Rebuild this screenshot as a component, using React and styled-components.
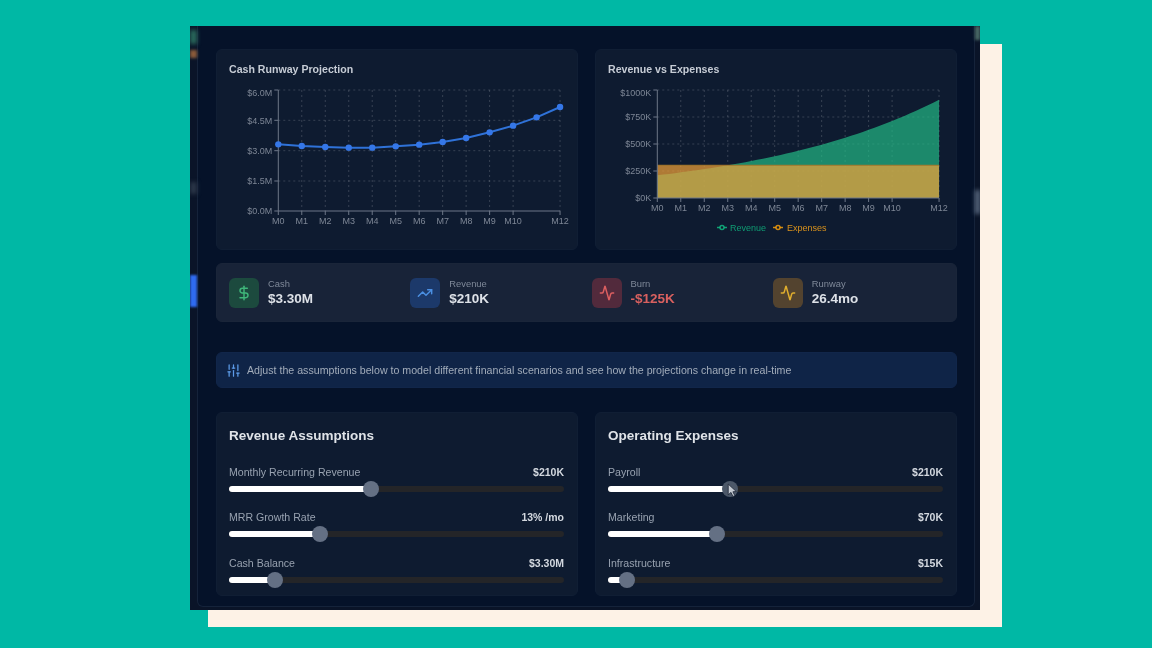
import React from 'react'
import styled, { createGlobalStyle } from 'styled-components'
import { Activity, DollarSign, SlidersVertical, TrendingUp } from 'lucide-react'

const GlobalStyle = createGlobalStyle`
  html, body {
    margin: 0;
    background: #00b8a5;
    font-family: "Liberation Sans", Arial, sans-serif;
  }
`;

const Stage = styled.div`
  width: 1152px;
  height: 648px;
  overflow: hidden;
  padding: 26px 0 0 190px;
  box-sizing: border-box;
`;

const Frame = styled.div`
  position: relative;
  isolation: isolate;
  width: 790px;
  height: 584px;
  &::before {
    content: "";
    position: absolute;
    z-index: -1;
    left: 18px;
    top: 18px;
    width: 794px;
    height: 583px;
    background: #fdf2e6;
  }
`;

const Window = styled.div`
  display: flex;
  height: 100%;
  background: #0a1428;
  overflow: hidden;
  filter: blur(0.45px);
`;

const Rail = styled.div`
  flex: 0 0 ${({ $width }) => $width}px;
  display: flex;
  flex-direction: column;
`;

const RailMark = styled.div`
  height: ${({ $height }) => $height}px;
  margin-top: ${({ $top }) => $top}px;
  background: ${({ $color }) => $color};
  filter: blur(${({ $blur }) => $blur}px);
`;

const Panel = styled.div`
  flex: 1;
  display: flex;
  flex-direction: column;
  box-sizing: border-box;
  height: 581px;
  padding: 23px 17px 0 18px;
  background: #051229;
  border: 1px solid #15233a;
  border-top: none;
  border-radius: 0 0 6px 6px;
`;

const Columns = styled.div`
  display: grid;
  grid-template-columns: 362px 362px;
  gap: 17px;
`;

const Card = styled.section`
  box-sizing: border-box;
  height: ${({ $height }) => $height}px;
  padding: 13px 13px 0 12px;
  background: #0e1b30;
  border: 1px solid #101e34;
  border-radius: 6px;
`;

const ChartTitle = styled.h3`
  margin: 0;
  font-size: 10.6px;
  line-height: 13px;
  font-weight: 700;
  color: #c6ccd5;
`;

const ChartSvg = styled.svg`
  display: block;
  margin-top: 8px;
  overflow: visible;
`;

const StatsBar = styled.div`
  display: grid;
  grid-template-columns: repeat(4, 1fr);
  gap: 10px;
  box-sizing: border-box;
  height: 59px;
  margin-top: 13px;
  padding: 13px 12px;
  background: #182338;
  border: 1px solid #1a2539;
  border-radius: 6px;
`;

const Stat = styled.div`
  display: flex;
  align-items: center;
  gap: 9px;
`;

const StatIcon = styled.div`
  display: flex;
  align-items: center;
  justify-content: center;
  width: 30px;
  height: 30px;
  border-radius: 6px;
  background: ${({ $bg }) => $bg};
  color: ${({ $fg }) => $fg};
`;

const StatLabel = styled.div`
  font-size: 9.4px;
  line-height: 11px;
  color: #7f8999;
`;

const StatValue = styled.div`
  margin-top: 2px;
  font-size: 13.5px;
  line-height: 16px;
  font-weight: 700;
  color: ${({ $color }) => $color || '#dde1e7'};
`;

const InfoBar = styled.div`
  display: flex;
  align-items: center;
  gap: 6px;
  box-sizing: border-box;
  height: 36px;
  margin: 30px 0 24px;
  padding: 0 9px;
  background: #0f2447;
  border: 1px solid #11264a;
  border-radius: 6px;
  font-size: 10.64px;
  color: #a2acba;
  svg { color: #5d9be8; }
`;

const SectionTitle = styled.h2`
  margin: 1px 0 20px;
  font-size: 13.5px;
  line-height: 18px;
  font-weight: 700;
  color: #dfe3e8;
`;

const SliderRow = styled.div`
  height: 45.5px;
`;

const SliderHead = styled.div`
  display: flex;
  justify-content: space-between;
  align-items: center;
  height: 13px;
  font-size: 10.6px;
  color: #98a2b0;
`;

const SliderValue = styled.span`
  font-size: 10.5px;
  font-weight: 700;
  color: #d3d8df;
`;

const Track = styled.div`
  position: relative;
  height: 6px;
  margin-top: 7.5px;
  border-radius: 3px;
  background: #242528;
`;

const Fill = styled.div`
  height: 100%;
  border-radius: 3px;
  background: #fff;
`;

const Thumb = styled.div`
  position: absolute;
  top: 50%;
  width: 16px;
  height: 16px;
  border-radius: 50%;
  background: ${({ $active }) => ($active ? '#4c5869' : '#647084')};
  transform: translate(-50%, -50%);
`;

const Pointer = styled.svg`
  position: absolute;
  left: 5px;
  top: 2px;
`;

const cashPoints = [388, 393, 396, 398, 398, 394, 389, 381, 369, 352, 332, 307, 276].map((z) => 15 + z / 3 - 84);

const MonthAxis = ({ x0, step, y }) => (
  <g>
    {[0, 1, 2, 3, 4, 5, 6, 7, 8, 9, 10, 12].map((m) => (
      <g key={m}>
        <line x1={x0 + m * step} x2={x0 + m * step} y1={y} y2={y + 4} stroke="#6d7788" />
        <text x={x0 + m * step} y={y + 13} textAnchor="middle" fontSize="9" fill="#7d8695">M{m}</text>
      </g>
    ))}
  </g>
);

const Grid = ({ x0, x1, step, top, bottom, rows }) => (
  <g stroke="#ffffff" strokeOpacity="0.17" strokeDasharray="2 3">
    {[1, 2, 3, 4, 5, 6, 7, 8, 9, 10, 12].map((m) => (
      <line key={m} x1={x0 + m * step} x2={x0 + m * step} y1={top} y2={bottom} />
    ))}
    {rows.map((r) => (
      <line key={r} x1={x0} x2={x1} y1={r} y2={r} />
    ))}
  </g>
);

const YAxis = ({ x0, ticks }) => (
  <g>
    <line x1={x0} x2={x0} y1={ticks[0].y} y2={ticks[ticks.length - 1].y} stroke="#6d7788" />
    {ticks.map((t) => (
      <g key={t.label}>
        <line x1={x0 - 4} x2={x0} y1={t.y} y2={t.y} stroke="#6d7788" />
        <text x={x0 - 6} y={t.textY} textAnchor="end" fontSize="9" fill="#7d8695">{t.label}</text>
      </g>
    ))}
  </g>
);

const CashChart = () => {
  const x0 = 49.3
  const step = 23.48
  const bottom = 127
  const line = cashPoints.map((y, i) => `${x0 + i * step},${y}`).join(' ')
  const ticks = [
    { label: '$6.0M', y: 6, textY: 12 },
    { label: '$4.5M', y: 36.3, textY: 39.5 },
    { label: '$3.0M', y: 66.7, textY: 70 },
    { label: '$1.5M', y: 97, textY: 100 },
    { label: '$0.0M', y: 127, textY: 130 },
  ]
  return (
    <ChartSvg width="336" height="150">
      <Grid x0={x0} x1={x0 + 12 * step} step={step} top={6} bottom={bottom} rows={[6, 36.3, 66.7, 97]} />
      <line x1={x0} x2={x0 + 12 * step} y1={bottom} y2={bottom} stroke="#6d7788" />
      <YAxis x0={x0} ticks={ticks} />
      <MonthAxis x0={x0} step={step} y={bottom} />
      <polyline points={line} fill="none" stroke="#2f72d8" strokeWidth="2" strokeLinejoin="round" />
      {cashPoints.map((y, i) => (
        <circle key={i} cx={x0 + i * step} cy={y} r="3.2" fill="#3577e8" />
      ))}
    </ChartSvg>
  )
}

const RevenueChart = () => {
  const x0 = 49.3
  const step = 23.48
  const bottom = 114
  const plotH = 108
  const yOf = (v) => bottom - (v / 1000) * plotH
  const curve = []
  for (let m = 0; m <= 12; m += 0.25) {
    curve.push(`${x0 + m * step},${yOf(210 * Math.pow(1.13, m))}`)
  }
  const xEnd = x0 + 12 * step
  const expenseY = yOf(303)
  const ticks = [
    { label: '$1000K', y: 6, textY: 12 },
    { label: '$750K', y: 33, textY: 36 },
    { label: '$500K', y: 60, textY: 63 },
    { label: '$250K', y: 87, textY: 90 },
    { label: '$0K', y: 114, textY: 117 },
  ]
  return (
    <ChartSvg width="336" height="155">
      <Grid x0={x0} x1={xEnd} step={step} top={6} bottom={bottom} rows={[6, 33, 60, 87]} />
      <polygon points={`${x0},${bottom} ${curve.join(' ')} ${xEnd},${bottom}`} fill="#23be87" fillOpacity="0.68" />
      <rect x={x0} y={expenseY} width={xEnd - x0} height={bottom - expenseY} fill="#f3a338" fillOpacity="0.7" />
      <line x1={x0} x2={xEnd} y1={expenseY} y2={expenseY} stroke="#a8792c" strokeWidth="1" />
      <line x1={x0} x2={xEnd} y1={bottom} y2={bottom} stroke="#6d7788" />
      <YAxis x0={x0} ticks={ticks} />
      <MonthAxis x0={x0} step={step} y={bottom} />
      <g fontSize="9">
        <line x1="109" x2="119" y1="143.5" y2="143.5" stroke="#10b981" strokeOpacity="0.85" strokeWidth="1.5" />
        <circle cx="114" cy="143.5" r="2" fill="#0e1b30" stroke="#10b981" strokeOpacity="0.85" strokeWidth="1.5" />
        <text x="122" y="146.5" fill="#10a97a" fillOpacity="0.9">Revenue</text>
        <line x1="165" x2="175" y1="143.5" y2="143.5" stroke="#f59e0b" strokeOpacity="0.85" strokeWidth="1.5" />
        <circle cx="170" cy="143.5" r="2" fill="#0e1b30" stroke="#f59e0b" strokeOpacity="0.85" strokeWidth="1.5" />
        <text x="179" y="146.5" fill="#d9921c">Expenses</text>
      </g>
    </ChartSvg>
  )
}

const stats = [
  { label: 'Cash', value: '$3.30M', Icon: DollarSign, bg: '#1c4a3e', fg: '#3fb67a' },
  { label: 'Revenue', value: '$210K', Icon: TrendingUp, bg: '#1c396a', fg: '#4b8fe2' },
  { label: 'Burn', value: '-$125K', Icon: Activity, bg: '#522a3c', fg: '#dc5f60', color: '#d8605f' },
  { label: 'Runway', value: '26.4mo', Icon: Activity, bg: '#53432f', fg: '#e0ae2e' },
]

const revenueSliders = [
  { label: 'Monthly Recurring Revenue', value: '$210K', pct: 42.4 },
  { label: 'MRR Growth Rate', value: '13% /mo', pct: 27.2 },
  { label: 'Cash Balance', value: '$3.30M', pct: 13.7 },
]

const expenseSliders = [
  { label: 'Payroll', value: '$210K', pct: 36.4, active: true },
  { label: 'Marketing', value: '$70K', pct: 32.6 },
  { label: 'Infrastructure', value: '$15K', pct: 5.6 },
]

const Slider = ({ label, value, pct, active }) => (
  <SliderRow>
    <SliderHead>
      <span>{label}</span>
      <SliderValue>{value}</SliderValue>
    </SliderHead>
    <Track>
      <Fill style={{ width: `${pct}%` }} />
      <Thumb $active={active} style={{ left: `${pct}%` }}>
        {active && (
          <Pointer width="11" height="15" viewBox="0 0 10 14">
            <path d="M1 1 L1 11 L3.6 8.8 L5.4 12.6 L7.2 11.8 L5.4 8.2 L8.6 8 Z" fill="#c4cad2" stroke="#20293a" strokeWidth="0.8" />
          </Pointer>
        )}
      </Thumb>
    </Track>
  </SliderRow>
)

const SliderIcon = () => <SlidersVertical size={15} strokeWidth={2} />

const App = () => {
  return (
    <Stage>
      <GlobalStyle />
      <Frame>
        <Window>
          <Rail $width={7}>
            <RailMark $top={4} $height={14} $color="#2a6a5c" $blur={2} />
            <RailMark $top={6} $height={8} $color="#8a5a3a" $blur={1.5} />
            <RailMark $top={124} $height={12} $color="#2b3648" $blur={2} />
            <RailMark $top={81} $height={32} $color="#2f6bf0" $blur={0.8} />
          </Rail>
          <Panel>
            <Columns>
              <Card $height={201}>
                <ChartTitle>Cash Runway Projection</ChartTitle>
                <CashChart />
              </Card>
              <Card $height={201}>
                <ChartTitle>Revenue vs Expenses</ChartTitle>
                <RevenueChart />
              </Card>
            </Columns>
            <StatsBar>
              {stats.map(({ label, value, Icon, bg, fg, color }) => (
                <Stat key={label}>
                  <StatIcon $bg={bg} $fg={fg}>
                    <Icon size={16} strokeWidth={2.2} />
                  </StatIcon>
                  <div>
                    <StatLabel>{label}</StatLabel>
                    <StatValue $color={color}>{value}</StatValue>
                  </div>
                </Stat>
              ))}
            </StatsBar>
            <InfoBar>
              <SliderIcon />
              Adjust the assumptions below to model different financial scenarios and see how the projections change in real-time
            </InfoBar>
            <Columns>
              <Card $height={184}>
                <SectionTitle>Revenue Assumptions</SectionTitle>
                {revenueSliders.map((s) => <Slider key={s.label} {...s} />)}
              </Card>
              <Card $height={184}>
                <SectionTitle>Operating Expenses</SectionTitle>
                {expenseSliders.map((s) => <Slider key={s.label} {...s} />)}
              </Card>
            </Columns>
          </Panel>
          <Rail $width={5}>
            <RailMark $top={0} $height={14} $color="#4a6a66" $blur={1.5} />
            <RailMark $top={150} $height={24} $color="#5a6a80" $blur={2} />
          </Rail>
        </Window>
      </Frame>
    </Stage>
  )
}

export default App
